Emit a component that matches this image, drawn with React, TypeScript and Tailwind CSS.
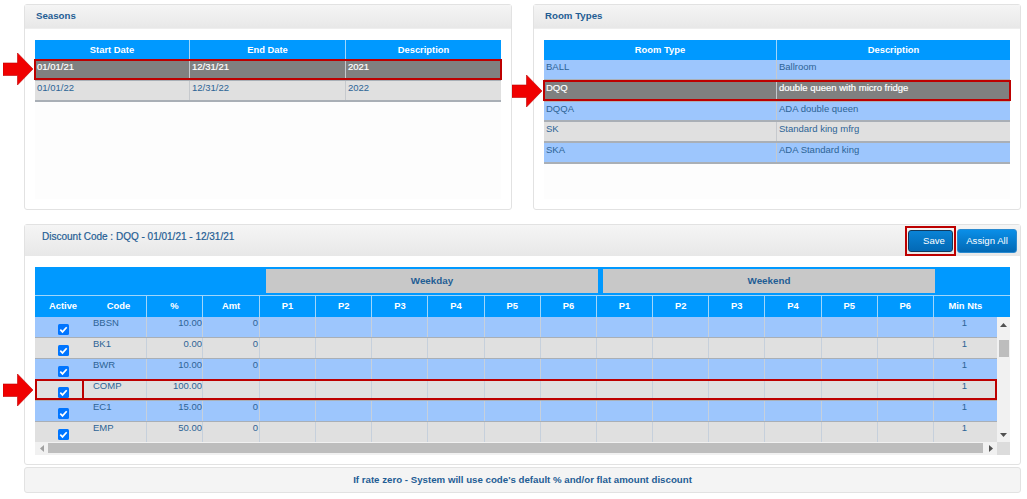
const font = { fontFamily: '"Liberation Sans", Arial, sans-serif' };

function Arrow({ className }: { className: string }) {
  return (
    <svg className={`absolute ${className}`} width="30" height="32" viewBox="0 0 30 32">
      <path d="M0 10H14.5V0L30 16L14.5 32V22.5H0Z" fill="#f00000" stroke="#c00000" strokeWidth="0.6" />
    </svg>
  );
}

function Panel({ title, children, className }: { title: string; children: React.ReactNode; className: string }) {
  return (
    <section className={`flex flex-col h-[206px] rounded-[3px] border border-[#e2e2e2] bg-white ${className}`}>
      <div className="h-[24px] shrink-0 px-[11px] pt-[4px] bg-gradient-to-b from-[#f5f5f5] to-[#e8e8e8] border-b border-[#eeeeee] text-[9.7px] font-bold text-[#1f5d94]">
        {title}
      </div>
      <div className="flex-1 mx-[10px] mt-[11px] mb-[10px] bg-[#fdfdfd]">{children}</div>
    </section>
  );
}

function SimpleTable({ cols, heads, rows }: { cols: string; heads: string[]; rows: { cells: string[]; bg: string; sel?: boolean }[] }) {
  return (
    <div>
      <div className={`grid ${cols} h-[20px] bg-[#0099ff] text-white text-[9.4px] font-bold`}>
        {heads.map((h, i) => (
          <div key={h} className={`flex items-center justify-center ${i ? 'border-l border-[#9fd6fb]' : ''}`}>{h}</div>
        ))}
      </div>
      {rows.map((r) => (
        <div
          key={r.cells[0]}
          className={`relative grid ${cols} h-[20.8px] border-b-2 border-[#a9afb6] text-[9.5px] ${r.bg} ${r.sel ? 'text-white [-webkit-text-stroke:0.2px_#ffffff]' : 'text-[#2d6496]'}`}
        >
          {r.cells.map((c, i) => (
            <div key={c} className={`pl-[2px] pt-[1px] leading-[12px] ${i ? 'border-l border-[#c6c9cd]' : ''}`}>{c}</div>
          ))}
          {r.sel && <div className="absolute -inset-x-[1px] -top-[1px] bottom-[-1px] border-2 border-[#bd0000]" />}
        </div>
      ))}
    </div>
  );
}

const dcRows = [
  { code: 'BBSN', pct: '10.00', amt: '0', bg: 'bg-[#9dc6fd]' },
  { code: 'BK1', pct: '0.00', amt: '0', bg: 'bg-[#e0e0e0]' },
  { code: 'BWR', pct: '10.00', amt: '0', bg: 'bg-[#9dc6fd]' },
  { code: 'COMP', pct: '100.00', amt: '', bg: 'bg-[#e0e0e0]', sel: true },
  { code: 'EC1', pct: '15.00', amt: '0', bg: 'bg-[#9dc6fd]' },
  { code: 'EMP', pct: '50.00', amt: '0', bg: 'bg-[#e0e0e0]' },
];

const periods = ['P1', 'P2', 'P3', 'P4', 'P5', 'P6', 'P1', 'P2', 'P3', 'P4', 'P5', 'P6'];
const gridCols = 'grid-cols-[56px_55px_56px_57px_repeat(12,56.17px)_64px]';

function Check() {
  return (
    <svg width="11" height="11" viewBox="0 0 11 11" className="block">
      <rect width="11" height="11" rx="1.5" fill="#0075ff" />
      <path d="M2.3 5.7L4.5 7.9L8.7 3.2" fill="none" stroke="#fff" strokeWidth="1.7" />
    </svg>
  );
}

export default function App() {
  return (
    <div style={font} className="relative w-[1027px] h-[499px] overflow-hidden bg-white pt-[4px] pl-[24px]">
      <Arrow className="left-[3px] top-[53px]" />
      <Arrow className="left-[512px] top-[75px]" />
      <Arrow className="left-[3px] top-[374px]" />

      <div className="flex gap-[21px] w-[997px]">
        <Panel title="Seasons" className="w-[488px]">
          <SimpleTable
            cols="grid-cols-[154px_156px_156px]"
            heads={['Start Date', 'End Date', 'Description']}
            rows={[
              { cells: ['01/01/21', '12/31/21', '2021'], bg: 'bg-[#808080]', sel: true },
              { cells: ['01/01/22', '12/31/22', '2022'], bg: 'bg-[#e0e0e0]' },
            ]}
          />
        </Panel>
        <Panel title="Room Types" className="w-[488px]">
          <SimpleTable
            cols="grid-cols-[232px_234px]"
            heads={['Room Type', 'Description']}
            rows={[
              { cells: ['BALL', 'Ballroom'], bg: 'bg-[#9dc6fd]' },
              { cells: ['DQQ', 'double queen with micro fridge'], bg: 'bg-[#808080]', sel: true },
              { cells: ['DQQA', 'ADA double queen'], bg: 'bg-[#9dc6fd]' },
              { cells: ['SK', 'Standard king mfrg'], bg: 'bg-[#e0e0e0]' },
              { cells: ['SKA', 'ADA Standard king'], bg: 'bg-[#9dc6fd]' },
            ]}
          />
        </Panel>
      </div>

      <section className="mt-[14px] w-[997px] h-[241px] rounded-[3px] border border-[#e2e2e2] bg-white">
        <div className="relative flex h-[31px] justify-between bg-gradient-to-b from-[#f5f5f5] to-[#e8e8e8] pl-[17px] pr-[3px] pt-[4px]">
          <span className="text-[10px] text-[#1f5d94] [-webkit-text-stroke:0.2px_#1f5d94]">Discount Code : DQQ - 01/01/21 - 12/31/21</span>
          <div className="flex gap-[4px] items-center h-[24px]">
            <div className="relative">
              <button className="block w-[45px] h-[22px] rounded-[3px] border border-[#12395c] bg-gradient-to-b from-[#0a83d6] to-[#0369b5] text-[9.6px] text-white pl-[7px]">Save</button>
              <div className="absolute -inset-x-[3px] -top-[4px] -bottom-[4px] border-2 border-[#bd0000]" />
            </div>
            <button className="w-[60px] h-[24px] rounded-[3px] border border-[#2a8ad0] bg-gradient-to-b from-[#0a8fe8] to-[#0369b5] text-[9.6px] text-white">Assign All</button>
          </div>
        </div>

        <div className="mx-[10px] mt-[11px] w-[975px] relative">
          <div className="flex h-[28px] bg-[#0099ff] pt-[2px] pb-[2px] pl-[231px] gap-[5px] text-[9.8px] font-bold text-[#1f5d94]">
            <div className="w-[332px] flex items-center justify-center bg-[#c8c8c8]">Weekday</div>
            <div className="w-[332px] flex items-center justify-center bg-[#c8c8c8]">Weekend</div>
          </div>

          <div className={`grid ${gridCols} h-[22px] bg-[#0099ff] border-t border-[#9fd6fb] text-[9.4px] font-bold text-white`}>
            {['Active', 'Code', '%', 'Amt', ...periods, 'Min Nts'].map((h, i) => (
              <div key={i} className={`flex items-center justify-center ${i > 1 ? 'border-l border-[#9fd6fb]' : ''}`}>{h}</div>
            ))}
          </div>

          <div className="flex h-[125px]">
            <div className="w-[962px] shrink-0 overflow-hidden">
              {dcRows.map((r) => (
                <div key={r.code} className={`relative grid ${gridCols} h-[21px] border-b border-[#a9afb6] text-[9.5px] text-[#2d6496] ${r.bg}`}>
                  <div className="flex justify-center pt-[7px]"><Check /></div>
                  <div className="pl-[2px] leading-[12px]">{r.code}</div>
                  <div className="border-l border-[#c6d0dc] text-right leading-[12px]">{r.pct}</div>
                  <div className="border-l border-[#c6d0dc] text-right pr-[1px] leading-[12px]">{r.amt}</div>
                  {periods.map((_, i) => (
                    <div key={i} className="border-l border-[#c6d0dc]" />
                  ))}
                  <div className="border-l border-[#c6d0dc] text-center pr-[2px] leading-[12px]">1</div>
                  {r.sel && (
                    <div className="absolute inset-x-0 -top-[1px] bottom-0 border-2 border-[#bd0000]">
                      <div className="h-full w-[2px] ml-[45px] bg-[#bd0000]" />
                    </div>
                  )}
                </div>
              ))}
            </div>
            <div className="relative w-[13px] bg-[#f1f1f1]">
              <svg className="absolute left-[3px] top-[6px]" width="7" height="4" viewBox="0 0 7 4"><path d="M0 4L3.5 0L7 4Z" fill="#505050" /></svg>
              <div className="absolute left-[2px] top-[23px] h-[17px] w-[10px] bg-[#bdbdbd]" />
              <svg className="absolute left-[3px] bottom-[5px]" width="7" height="4" viewBox="0 0 7 4"><path d="M0 0L3.5 4L7 0Z" fill="#505050" /></svg>
            </div>
          </div>

          <div className="flex h-[13px]">
            <div className="relative flex-1 bg-[#f1f1f1]">
              <svg className="absolute left-[5px] top-[3px]" width="4" height="7" viewBox="0 0 4 7"><path d="M4 0L0 3.5L4 7Z" fill="#a0a0a0" /></svg>
              <div className="absolute left-[13px] top-[1px] h-[10px] w-[935px] bg-[#bdbdbd]" />
              <svg className="absolute right-[4px] top-[3px]" width="4" height="7" viewBox="0 0 4 7"><path d="M0 0L4 3.5L0 7Z" fill="#505050" /></svg>
            </div>
            <div className="w-[13px] bg-[#dcdcdc]" />
          </div>
        </div>
      </section>

      <footer className="mt-[2px] flex h-[26px] w-[997px] items-center justify-center rounded-[3px] border border-[#e2e2e2] bg-[#f4f4f4] text-[9.7px] font-bold text-[#1f5d94]">
        If rate zero - System will use code's default % and/or flat amount discount
      </footer>
    </div>
  );
}
